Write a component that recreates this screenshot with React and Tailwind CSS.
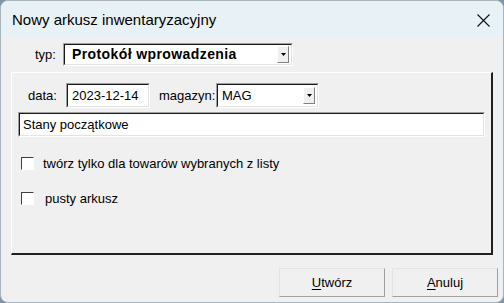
function Sunken({ className = "", children }) {
  return (
    <div className={"border-t border-l border-[#a0a0a0] border-b border-r border-b-white border-r-white " + className}>
      <div className="w-full h-full border-t border-l border-[#1a1a1a] border-b border-r border-b-[#e3e3e3] border-r-[#e3e3e3] bg-white flex items-center">
        {children}
      </div>
    </div>
  );
}

function Arrow({ className = "" }) {
  return (
    <div className={"w-[12px] h-[17px] shrink-0 bg-[#f0f0f0] border-t border-l border-white border-b border-r border-b-[#808080] border-r-[#808080] flex items-center justify-center " + className}>
      <svg width="5" height="3" viewBox="0 0 5 3"><path d="M0 0h5L2.5 3z" fill="#000" /></svg>
    </div>
  );
}

function Check({ className = "" }) {
  return (
    <div className={"w-[13px] h-[13px] shrink-0 border-t border-l border-[#404040] border-b border-r border-b-white border-r-white bg-white " + className} />
  );
}

function Btn({ children, u }) {
  return (
    <div className="w-[106px] h-[29px] border-t border-l border-[#e3e3e3] border-b border-r border-b-[#a0a0a0] border-r-[#a0a0a0] bg-[#f0f0f0] flex items-center justify-center text-[13px]">
      <span><span className="underline underline-offset-2">{u}</span>{children}</span>
    </div>
  );
}

export default function App() {
  return (
    <div className="w-[504px] h-[303px] bg-[#7d95a6] overflow-hidden">
      <div className="w-full h-full rounded-[8px] border border-[#a9b5bd] bg-[#f0f0f0] overflow-hidden flex flex-col font-['Liberation_Sans',Arial,sans-serif] text-black">
        <div className="h-[36px] shrink-0 bg-[#e8f2f6] flex items-center justify-between pl-[11px] pr-[13px]">
          <span className="text-[15px] leading-none mt-[1px]">Nowy arkusz inwentaryzacyjny</span>
          <svg width="13" height="13" viewBox="0 0 13 13" className="mt-[2px]">
            <path d="M0.5 0.5L12.5 12.5M12.5 0.5L0.5 12.5" stroke="#111" strokeWidth="1.1" />
          </svg>
        </div>

        <div className="mt-[6px] ml-[34px] flex items-center h-[23px] text-[13px]">
          <span className="w-[28px]">typ:</span>
          <Sunken className="w-[230px] h-[23px]">
            <span className="pl-[7px] text-[14px] font-bold tracking-[0.4px] flex-1">Protokół wprowadzenia</span>
            <Arrow className="mr-[2px]" />
          </Sunken>
        </div>

        <div className="mt-[6px] ml-[10px] w-[482px] h-[183px] border-t border-l border-white border-b-2 border-r-2 border-b-[#202020] border-r-[#202020] text-[13px]">
          <div className="flex items-center mt-[10px] ml-[16px] h-[25px]">
            <span className="w-[38px]">data:</span>
            <Sunken className="w-[84px] h-[25px]">
              <span className="pl-[4px]">2023-12-14</span>
            </Sunken>
            <span className="ml-[9px] w-[57px]">magazyn:</span>
            <Sunken className="w-[103px] h-[25px]">
              <span className="pl-[4px] flex-1">MAG</span>
              <Arrow className="mr-[2px]" />
            </Sunken>
          </div>
          <Sunken className="mt-[4px] ml-[6px] w-[467px] h-[25px]">
            <span className="pl-[3px]">Stany początkowe</span>
          </Sunken>
          <div className="flex items-center h-[13px] mt-[20px] ml-[9px]">
            <Check />
            <span className="ml-[9px] leading-none">twórz tylko dla towarów wybranych z listy</span>
          </div>
          <div className="flex items-center h-[13px] mt-[22px] ml-[9px]">
            <Check />
            <span className="ml-[11px] leading-none">pusty arkusz</span>
          </div>
        </div>

        <div className="mt-[13px] flex justify-end gap-[7px] pr-[5px]">
          <Btn u="U">twórz</Btn>
          <Btn u="A">nuluj</Btn>
        </div>
      </div>
    </div>
  );
}
